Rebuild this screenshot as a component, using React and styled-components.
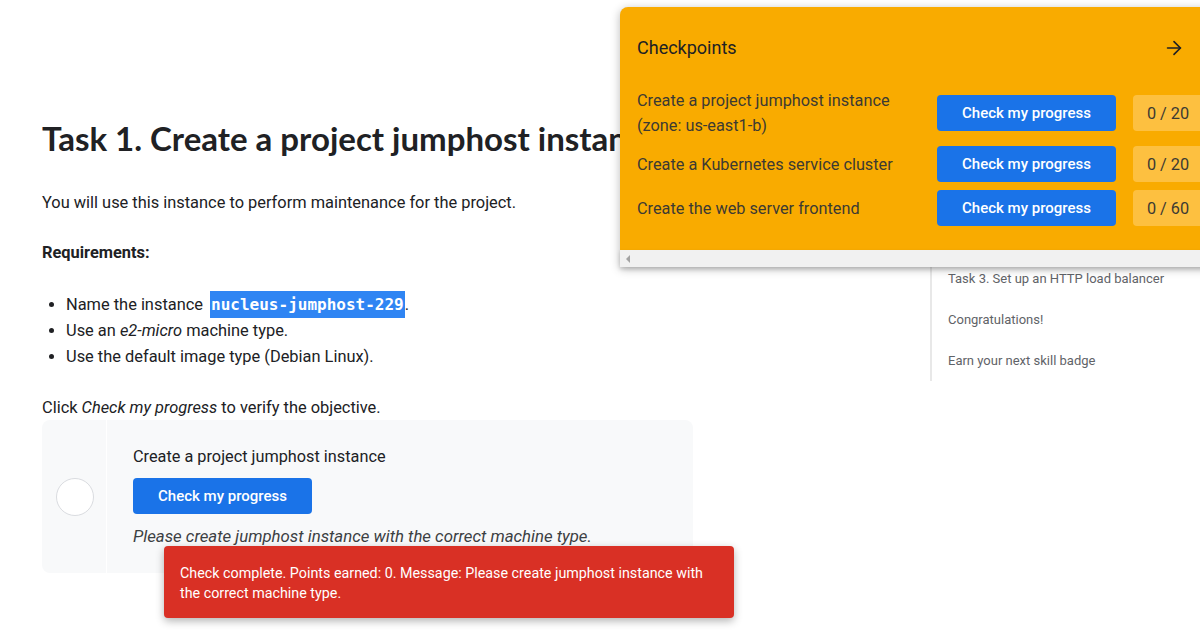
import React from "react";
import styled, { createGlobalStyle } from "styled-components";
import { ArrowRight } from "lucide-react";

const GlobalStyle = createGlobalStyle`
  html, body {
    margin: 0;
    padding: 0;
    background: #ffffff;
    overflow: hidden;
  }
  body {
    font-family: Roboto, "Liberation Sans", sans-serif;
    color: #202124;
  }
`;

const Page = styled.div`
  position: relative;
  width: 1200px;
  height: 634px;
  overflow: hidden;
  display: flex;
`;

const Main = styled.main`
  width: 651px;
  padding: 118px 237px 0 42px;
  flex-shrink: 0;
`;

const Heading = styled.h1`
  margin: 0;
  font-family: Lato, "Open Sans", sans-serif;
  font-weight: 700;
  font-size: 33px;
  line-height: 40px;
  white-space: nowrap;
  color: #202124;
`;

const Para = styled.p`
  margin: ${(p) => p.$top || 0}px 0 0;
  font-size: 16.4px;
  line-height: 24px;
  font-weight: ${(p) => (p.$bold ? 700 : 400)};
  color: #202124;
`;

const List = styled.ul`
  margin: 27px 0 0;
  padding: 0 0 0 24px;
  font-size: 16.4px;
  line-height: 26px;
  color: #202124;
`;

const Code = styled.code`
  font-family: "DejaVu Sans Mono", "Liberation Mono", monospace;
  font-weight: 700;
  font-size: 16px;
  color: #ffffff;
  background: #2f85f3;
  padding: 4px 1px;
  margin-left: 3px;
`;

const Card = styled.div`
  display: flex;
  background: #f8f9fa;
  border-radius: 8px;
  height: 153px;
`;

const CardSide = styled.div`
  width: 64px;
  flex-shrink: 0;
  display: flex;
  align-items: center;
  justify-content: center;
  border-right: 1px solid #ffffff;
`;

const Circle = styled.div`
  width: 36px;
  height: 36px;
  border-radius: 50%;
  background: #ffffff;
  border: 1.5px solid #dadce0;
  margin-left: 1px;
`;

const CardBody = styled.div`
  padding: 25px 0 25px 26px;
  display: flex;
  flex-direction: column;
  align-items: flex-start;
`;

const CardTitle = styled.div`
  font-size: 16.3px;
  line-height: 24px;
  color: #202124;
`;

const Button = styled.button`
  border: none;
  border-radius: 4px;
  background: #1a73e8;
  color: #ffffff;
  font-family: Roboto, sans-serif;
  font-weight: 500;
  font-size: 15px;
  height: 36px;
  width: ${(p) => p.$width || 179}px;
  padding: 0;
  cursor: pointer;
`;

const CardButton = styled(Button)`
  margin: 9px 0 10px;
`;

const Feedback = styled.div`
  font-style: italic;
  font-size: 16.8px;
  line-height: 24px;
  color: #3c4043;
`;

const Aside = styled.aside`
  padding-top: 94px;
  flex: 1;
`;

const Nav = styled.nav`
  border-left: 2px solid #e8e8e8;
  padding: 164px 0 0 16px;
`;

const NavItem = styled.div`
  font-size: 13px;
  line-height: 20px;
  padding: 10.5px 0;
  color: #5f6368;
  white-space: nowrap;
`;

const Panel = styled.section`
  position: absolute;
  top: 7px;
  left: 620px;
  width: 600px;
  background: #f9ab00;
  border-radius: 8px 0 0 0;
  box-shadow: 0 2px 10px rgba(0, 0, 0, 0.28);
  display: flex;
  flex-direction: column;
`;

const PanelHead = styled.div`
  height: 81px;
  display: flex;
  align-items: center;
  justify-content: space-between;
  padding: 0 35px 0 17px;
  font-size: 18px;
  color: #202124;
`;

const Rows = styled.div`
  display: flex;
  flex-direction: column;
  gap: 8px;
  padding: 0 17px 24px;
`;

const Row = styled.div`
  display: grid;
  grid-template-columns: 1fr 179px 70px;
  column-gap: 17px;
  align-items: center;
`;

const RowLabel = styled.div`
  font-size: 16.3px;
  line-height: 25px;
  color: #3c3a33;
`;

const Score = styled.div`
  height: 36px;
  border-radius: 4px;
  background: #fdc040;
  display: flex;
  align-items: center;
  justify-content: center;
  font-size: 16.3px;
  color: #3c3a33;
`;

const ScrollStrip = styled.div`
  height: 17px;
  background: #f1f1f1;
  display: flex;
  align-items: center;
  padding-left: 6px;
  box-shadow: 0 2px 4px rgba(0, 0, 0, 0.15);
`;

const ScrollArrow = styled.span`
  width: 0;
  height: 0;
  border-top: 4px solid transparent;
  border-bottom: 4px solid transparent;
  border-right: 4px solid #a3a3a3;
`;

const Toast = styled.div`
  position: absolute;
  left: 164px;
  top: 546px;
  width: 532px;
  padding: 17px 22px 15px 16px;
  background: #d93025;
  color: #ffffff;
  border-radius: 4px;
  font-size: 14.3px;
  line-height: 20px;
  box-shadow: 0 3px 8px rgba(0, 0, 0, 0.3);
`;

const checkpoints = [
  { label: "Create a project jumphost instance (zone: us-east1-b)", score: "0 / 20" },
  { label: "Create a Kubernetes service cluster", score: "0 / 20" },
  { label: "Create the web server frontend", score: "0 / 60" },
];

const navItems = [
  "Task 3. Set up an HTTP load balancer",
  "Congratulations!",
  "Earn your next skill badge",
];

export default function App() {
  return (
    <Page>
      <GlobalStyle />
      <Main>
        <Heading>Task 1. Create a project jumphost instance</Heading>
        <Para $top={33}>You will use this instance to perform maintenance for the project.</Para>
        <Para $top={26} $bold>Requirements:</Para>
        <List>
          <li>
            Name the instance <Code>nucleus-jumphost-229</Code>.
          </li>
          <li>
            Use an <em>e2-micro</em> machine type.
          </li>
          <li>Use the default image type (Debian Linux).</li>
        </List>
        <Para $top={26}>
          Click <em>Check my progress</em> to verify the objective.
        </Para>
        <Card>
          <CardSide>
            <Circle />
          </CardSide>
          <CardBody>
            <CardTitle>Create a project jumphost instance</CardTitle>
            <CardButton>Check my progress</CardButton>
            <Feedback>Please create jumphost instance with the correct machine type.</Feedback>
          </CardBody>
        </Card>
      </Main>
      <Aside>
        <Nav>
          {navItems.map((item) => (
            <NavItem key={item}>{item}</NavItem>
          ))}
        </Nav>
      </Aside>

      <Panel>
        <PanelHead>
          <span>Checkpoints</span>
          <ArrowRight size={22} strokeWidth={1.8} color="#202124" />
        </PanelHead>
        <Rows>
          {checkpoints.map((c) => (
            <Row key={c.label}>
              <RowLabel>{c.label}</RowLabel>
              <Button>Check my progress</Button>
              <Score>{c.score}</Score>
            </Row>
          ))}
        </Rows>
        <ScrollStrip>
          <ScrollArrow />
        </ScrollStrip>
      </Panel>

      <Toast>
        Check complete. Points earned: 0. Message: Please create jumphost instance with the correct
        machine type.
      </Toast>
    </Page>
  );
}
